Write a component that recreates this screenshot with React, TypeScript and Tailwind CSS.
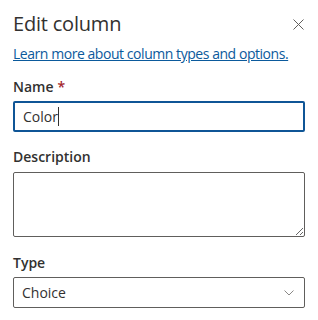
import React from "react";

const font = { fontFamily: '"Open Sans", "Noto Sans", Arial, sans-serif' };

function FieldLabel({ text, required }: { text: string; required?: boolean }) {
  return (
    <div className="text-[14px] leading-[20px] font-semibold text-[#323130]">
      {text}
      {required && <span className="ml-[4px] text-[#a4262c]">*</span>}
    </div>
  );
}

export default function App() {
  return (
    <div className="w-[318px] h-[320px] bg-white px-[13px] overflow-hidden" style={font}>
      <div className="mt-[10px] h-[28px] flex items-center justify-between">
        <h1 className="text-[20px] leading-[28px] font-normal text-[#323130] tracking-[-0.2px]">Edit column</h1>
        <button className="w-[12px] h-[12px] mr-[1px] flex items-center justify-center text-[#605e5c]">
          <svg width="11" height="11" viewBox="0 0 11 11" fill="none" stroke="currentColor" strokeWidth="1">
            <path d="M0.5 0.5 L10.5 10.5 M10.5 0.5 L0.5 10.5" />
          </svg>
        </button>
      </div>
      <a href="#" className="block mt-[6px] text-[14px] leading-[20px] text-[#0b5a9c] underline tracking-[-0.45px]">
        Learn more about column types and options.
      </a>

      <div className="mt-[13px]">
        <FieldLabel text="Name" required />
        <div className="mt-[4px] h-[31px] border-2 border-[#0f5596] rounded-[2px] flex items-center px-[8px] text-[14px] text-[#323130]">
          <span>Color</span>
          <span className="w-px h-[19px] bg-[#323130]" />
        </div>
      </div>

      <div className="mt-[15px]">
        <FieldLabel text="Description" />
        <textarea className="mt-[5px] block w-full h-[65px] border border-[#605e5c] rounded-[2px] px-[8px] py-[6px] text-[14px] outline-none" />
      </div>

      <div className="mt-[16px]">
        <FieldLabel text="Type" />
        <div className="mt-[4px] h-[31px] border border-[#605e5c] rounded-[2px] flex items-center justify-between pl-[8px] pr-[10px] text-[14px] text-[#323130]">
          <span>Choice</span>
          <svg width="10" height="6" viewBox="0 0 10 6" fill="none" stroke="#8a8886" strokeWidth="1">
            <path d="M0.5 0.5 L5 5 L9.5 0.5" />
          </svg>
        </div>
      </div>
    </div>
  );
}
